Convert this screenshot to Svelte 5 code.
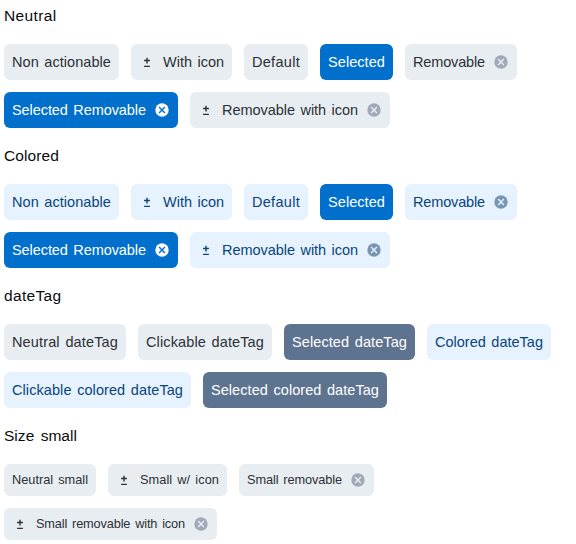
<script>
  const sections = [
    {
      title: 'Neutral', width: 52.5,
      tags: [
        { text: 'Non actionable', width: 99 },
        { text: 'With icon', width: 61, icon: true },
        { text: 'Default', width: 48 },
        { text: 'Selected', width: 57, tone: 'selected' },
        { text: 'Removable', width: 72, removable: true },
        { text: 'Selected Removable', width: 134, tone: 'selected', removable: true },
        { text: 'Removable with icon', width: 136, icon: true, removable: true }
      ]
    },
    {
      title: 'Colored', width: 55,
      tags: [
        { text: 'Non actionable', width: 99, tone: 'colored' },
        { text: 'With icon', width: 61, tone: 'colored', icon: true },
        { text: 'Default', width: 48, tone: 'colored' },
        { text: 'Selected', width: 57, tone: 'selected' },
        { text: 'Removable', width: 72, tone: 'colored', removable: true },
        { text: 'Selected Removable', width: 134, tone: 'selected', removable: true },
        { text: 'Removable with icon', width: 136, tone: 'colored', icon: true, removable: true }
      ]
    },
    {
      title: 'dateTag', width: 57.5,
      tags: [
        { text: 'Neutral dateTag', width: 106 },
        { text: 'Clickable dateTag', width: 118 },
        { text: 'Selected dateTag', width: 115, tone: 'date' },
        { text: 'Colored dateTag', width: 108, tone: 'colored' },
        { text: 'Clickable colored dateTag', width: 171, tone: 'colored' },
        { text: 'Selected colored dateTag', width: 168, tone: 'date' }
      ]
    },
    {
      title: 'Size small', width: 73, small: true,
      tags: [
        { text: 'Neutral small', width: 76 },
        { text: 'Small w/ icon', width: 79, icon: true },
        { text: 'Small removable', width: 95, removable: true },
        { text: 'Small removable with icon', width: 149, icon: true, removable: true }
      ]
    }
  ];

  // Tracks the label out or in so that it fills its given width.
  function fit(node, width) {
    const range = document.createRange();
    range.selectNodeContents(node);
    const natural = range.getBoundingClientRect().width;
    node.style.letterSpacing = `${(width - natural) / node.textContent.length}px`;
  }
</script>

<main>
  {#each sections as section}
    <section class:small={section.small}>
      <h2><span use:fit={section.width}>{section.title}</span></h2>
      <div class="tags">
        {#each section.tags as tag}
          <div class="tag {tag.tone ?? 'neutral'}">
            {#if tag.icon}
              <svg class="icon" viewBox="0 0 16 16" aria-hidden="true">
                <path d="M8 3.8v5.8M5.1 6.5h5.8M5.1 12.4h5.8" fill="none" stroke="currentColor" stroke-width="1.4" />
              </svg>
            {/if}
            <span class="label" style="width: {tag.width}px" use:fit={tag.width}>{tag.text}</span>
            {#if tag.removable}
              <svg class="icon remove" viewBox="0 0 16 16" aria-hidden="true">
                <circle cx="8" cy="8" r="6.7" />
                <path d="M5.1 5.1l5.8 5.8M10.9 5.1l-5.8 5.8" fill="none" stroke-width="1.4" />
              </svg>
            {/if}
          </div>
        {/each}
      </div>
    </section>
  {/each}
</main>

<style>
  :global(body) {
    margin: 0;
    background: #fff;
  }
  main {
    font-family: "Liberation Sans", Arial, sans-serif;
    padding: 4px;
    display: flex;
    flex-direction: column;
    gap: 16px;
  }
  h2 {
    margin: 0 0 16px;
    font-size: 15.5px;
    line-height: 24px;
    font-weight: 400;
    color: #0c0c0c;
    word-spacing: 2px;
    white-space: nowrap;
  }
  .tags {
    display: flex;
    flex-wrap: wrap;
    gap: 12px;
  }
  .tag {
    --bg: #e8edf1;
    --fg: #2b3136;
    --remove: #a0a9b8;
    display: flex;
    align-items: center;
    gap: 8px;
    height: 36px;
    padding: 0 8px;
    box-sizing: border-box;
    border-radius: 6px;
    background: var(--bg);
    color: var(--fg);
    font-size: 14.5px;
    line-height: 25px;
  }
  .small .tag {
    height: 32px;
    font-size: 12.75px;
    line-height: 20px;
  }
  .label {
    display: block;
    white-space: nowrap;
    word-spacing: 1.5px;
  }
  .colored {
    --bg: #e6f3ff;
    --fg: #0a4478;
    --remove: #7895b3;
  }
  .selected {
    --bg: #0070cc;
    --fg: #fff;
    --remove: #fff;
  }
  .date {
    --bg: #5e738f;
    --fg: #fff;
  }
  .icon {
    width: 16px;
    height: 16px;
    flex: none;
  }
  .remove circle {
    fill: var(--remove);
  }
  .remove path {
    stroke: var(--bg);
  }
</style>
